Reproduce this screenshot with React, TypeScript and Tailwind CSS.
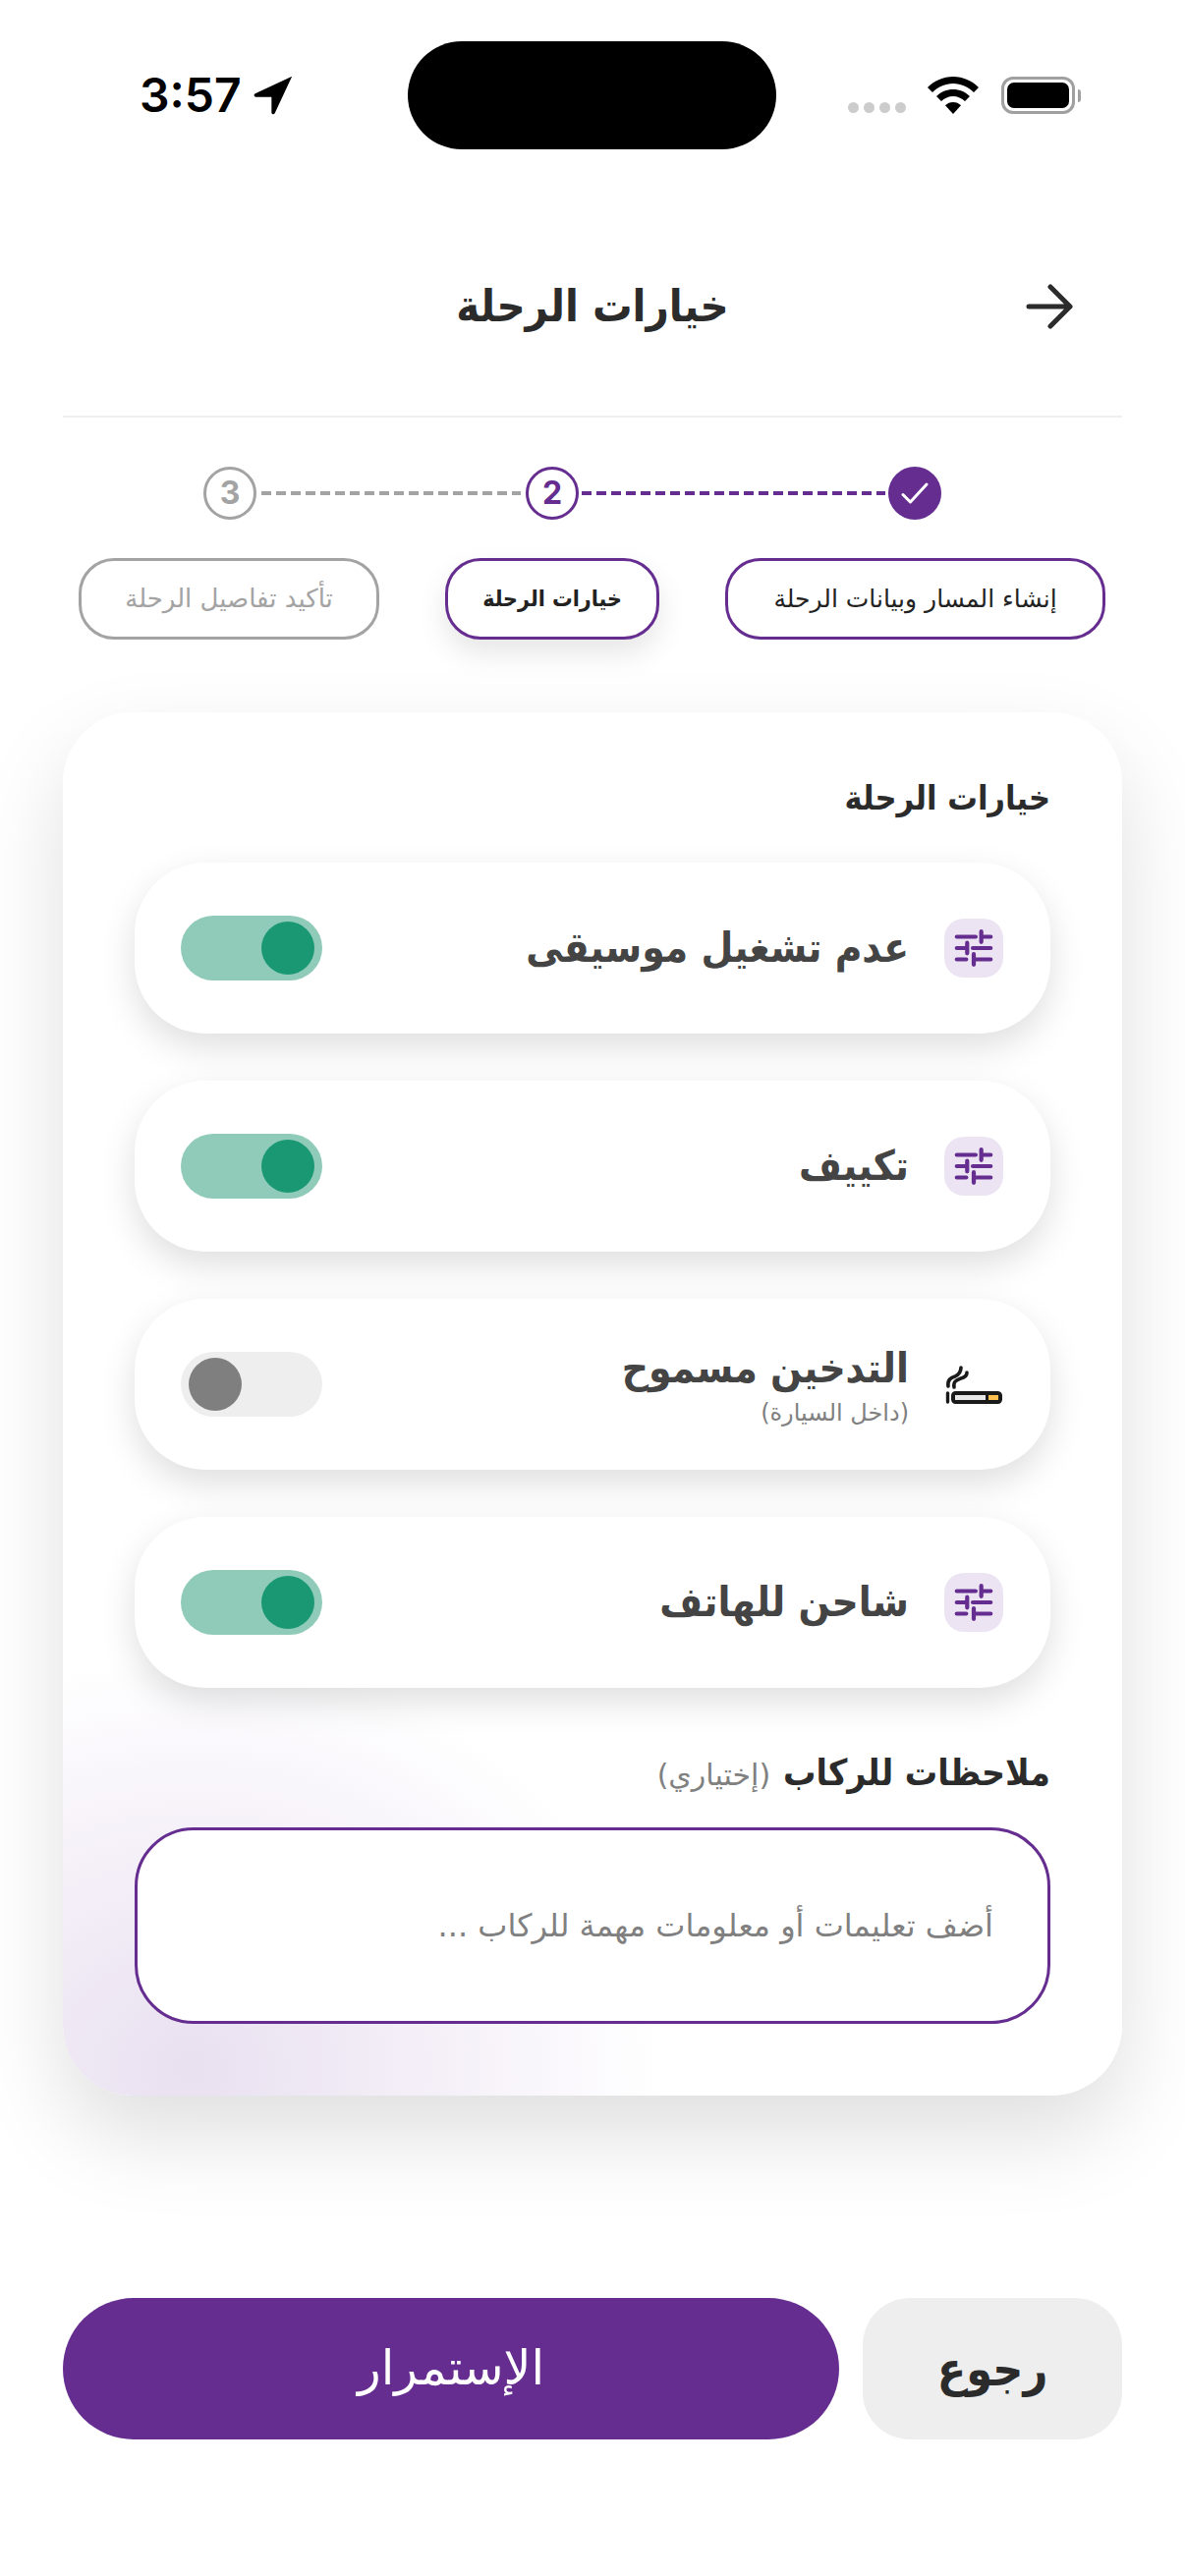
const PURPLE = '#652d90';
const CONDENSED = "font-['DejaVu_Sans_Condensed','DejaVu_Sans',sans-serif]";

function SlidersIcon() {
  return (
    <div className="flex h-[60px] w-[60px] shrink-0 items-center justify-center rounded-[20px] bg-[#ece4f2]">
      <svg viewBox="0 0 24 24" className="h-[46px] w-[46px]" fill="none" stroke={PURPLE} strokeWidth="2.2" strokeLinecap="round">
        <path d="M3 6h10M16 3.200v5.600M16 6h5" />
        <path d="M3 12h5M8.500 9.200v5.600M11.500 12H21" />
        <path d="M3 18h5M12 15.200v5.600M12 18h9" />
      </svg>
    </div>
  );
}

function CigaretteIcon() {
  return (
    <div className="flex h-[60px] w-[60px] shrink-0 items-center justify-center">
      <svg viewBox="0 0 58 40" className="h-[40px] w-[58px]" fill="none">
        <path d="M3 22c-1-7 3-9 7-10 4-2 6-4 6-9" stroke="#1a1a1a" strokeWidth="3.600" strokeLinecap="round" />
        <path d="M9 23c-1-6 2-7 7-9 4-1 6-3 6-6" stroke="#1a1a1a" strokeWidth="3.600" strokeLinecap="round" />
        <path d="M2.500 29v9" stroke="#1a1a1a" strokeWidth="3.400" strokeLinecap="round" />
        <rect x="8" y="29" width="48" height="9" rx="2.500" fill="#fff" stroke="#1a1a1a" strokeWidth="4" />
        <rect x="10" y="31" width="31" height="5" fill="#e8e8e8" />
        <rect x="41" y="29" width="3" height="9" fill="#1a1a1a" />
        <rect x="44" y="31" width="10" height="5" fill="#fbbf4d" />
      </svg>
    </div>
  );
}

function Toggle({ on }: { on: boolean }) {
  return (
    <div className={`flex h-[66px] w-[144px] shrink-0 items-center rounded-full px-2 ${on ? 'justify-end bg-[#8fcbb8]' : 'justify-start bg-[#eeeeee]'}`} dir="ltr">
      <div className={`h-[54px] w-[54px] rounded-full ${on ? 'bg-[#1a9874]' : 'bg-[#7f7f7f]'}`} />
    </div>
  );
}

function OptionRow({ title, sub, on, icon }: { title: string; sub?: string; on: boolean; icon: React.ReactNode }) {
  return (
    <div className="flex h-[174px] items-center justify-between rounded-[72px] bg-white pr-12 pl-[47px] shadow-[0_14px_36px_rgba(0,0,0,0.13)]">
      <div className="flex items-center gap-[36px]">
        {icon}
        <div className="flex flex-col">
          <span className={`${CONDENSED} text-[42px] leading-[58px] font-bold text-[#444444]`}>{title}</span>
          {sub && <span className="text-[24px] leading-[32px] text-[#808080]">{sub}</span>}
        </div>
      </div>
      <Toggle on={on} />
    </div>
  );
}

function StatusBar() {
  return (
    <div dir="ltr" className="mt-[42px] flex h-[110px] items-center pr-[106px] pl-[142px]">
      <div className="flex w-[273px] items-center gap-[12px] font-['Inter',sans-serif] text-[48px] leading-none font-semibold text-black">
        <span>3:57</span>
        <svg viewBox="0 0 24 24" className="h-[40px] w-[40px]" fill="#000">
          <path d="M23.500.5 1 11c-1 .5-.7 2 .5 2h9.500v9.500c0 1.200 1.500 1.500 2 .5L23.500.5z" />
        </svg>
      </div>
      <div className="h-[110px] w-[375px] rounded-[55px] bg-black" />
      <div className="ml-auto flex items-center">
        <div className="mt-[25px] mr-[22px] flex gap-[5px]">
          <div className="h-[11px] w-[11px] rounded-full bg-[#cccccc]" />
          <div className="h-[11px] w-[11px] rounded-full bg-[#cccccc]" />
          <div className="h-[11px] w-[11px] rounded-full bg-[#cccccc]" />
          <div className="h-[11px] w-[11px] rounded-full bg-[#cccccc]" />
        </div>
        <svg viewBox="0 0 52 38" className="mr-[23px] h-[38px] w-[52px]" fill="#000">
          <path d="M26 0C16 0 7 4 0 11l5 5c5.500-5.500 13-9 21-9s15.500 3.500 21 9l5-5C45 4 36 0 26 0z" />
          <path d="M26 13c-6.500 0-12.500 2.500-17 7l5 5c3-3 7.500-5 12-5s9 2 12 5l5-5c-4.500-4.500-10.500-7-17-7z" />
          <path d="M26 26c-3 0-6 1.200-8 3.300L26 38l8-8.700C32 27.200 29 26 26 26z" />
        </svg>
        <div className="flex items-center gap-[3px]">
          <div className="flex h-[38px] w-[75px] items-center justify-center rounded-[12px] border-[3px] border-[#a0a0a0]">
            <div className="h-[26px] w-[63px] rounded-[7px] bg-black" />
          </div>
          <div className="h-[13px] w-[3px] rounded-r-full bg-[#a0a0a0]" />
        </div>
      </div>
    </div>
  );
}

function Stepper() {
  return (
    <div className="mt-[50px] flex items-center pr-[248px]">
      <div className="flex h-[54px] w-[54px] items-center justify-center rounded-full bg-[#652d90]">
        <svg viewBox="0 0 24 24" className="h-[36px] w-[36px]" fill="none" stroke="#fff" strokeWidth="2" strokeLinecap="round" strokeLinejoin="round">
          <path d="M4 13l5 5L20 6" />
        </svg>
      </div>
      <div className="mx-[3px] h-[4px] w-[309px] bg-[repeating-linear-gradient(90deg,#652d90_0,#652d90_10px,transparent_10px,transparent_15px)]" />
      <div className="flex h-[54px] w-[54px] items-center justify-center rounded-full border-[3px] border-[#652d90] font-['Inter',sans-serif] text-[32px] font-bold text-[#652d90]">2</div>
      <div className="mx-[5px] h-[4px] w-[264px] bg-[repeating-linear-gradient(90deg,#a3a3a3_0,#a3a3a3_10px,transparent_10px,transparent_15px)]" />
      <div className="flex h-[54px] w-[54px] items-center justify-center rounded-full border-[3px] border-[#a3a3a3] font-['Inter',sans-serif] text-[32px] font-bold text-[#a3a3a3]">3</div>
    </div>
  );
}

export default function App() {
  return (
    <div dir="rtl" className="min-h-[2622px] bg-white font-['DejaVu_Sans',sans-serif]">
      <StatusBar />

      <div className="relative mt-[100px] flex h-[120px] items-center justify-center">
        <h1 className={`${CONDENSED} text-[45px] font-bold text-[#2b2b2b]`}>خيارات الرحلة</h1>
        <svg viewBox="0 0 48 48" className="absolute top-[36px] right-[114px] h-[48px] w-[48px]" fill="none" stroke="#2b2b2b" strokeWidth="5" strokeLinecap="round" strokeLinejoin="round">
          <path d="M3 24h42M25 4l20 20-20 20" />
        </svg>
      </div>

      <div className="mx-16 mt-[51px] h-[2px] bg-[#eeeeee]" />

      <Stepper />

      <div className="mt-[39px] flex justify-start gap-[67px] pr-[81px]">
        <div className="flex h-[83px] w-[387px] items-center justify-center rounded-[36px] border-[3px] border-[#652d90] bg-white text-[25px] text-[#222222]">إنشاء المسار وبيانات الرحلة</div>
        <div className={`${CONDENSED} flex h-[83px] w-[218px] items-center justify-center rounded-[36px] border-[3px] border-[#652d90] bg-white text-[23px] font-bold text-[#222222] shadow-[0_14px_30px_rgba(0,0,0,0.1)]`}>خيارات الرحلة</div>
        <div className="flex h-[83px] w-[306px] items-center justify-center rounded-[36px] border-[3px] border-[#a3a3a3] bg-white text-[26px] text-[#a3a3a3]">تأكيد تفاصيل الرحلة</div>
      </div>

      <div className="mx-16 mt-[74px] h-[1408px] rounded-[72px] bg-[radial-gradient(ellipse_480px_420px_at_130px_1380px,#e9e0f0,#f6f2f9_60%,#ffffff)] px-[73px] pt-[62px] shadow-[0_40px_90px_rgba(0,0,0,0.13)]">
        <h2 className={`${CONDENSED} text-[34px] leading-[50px] font-bold text-[#2b2b2b]`}>خيارات الرحلة</h2>

        <div className="mt-[41px] flex flex-col gap-12">
          <OptionRow title="عدم تشغيل موسيقى" on icon={<SlidersIcon />} />
          <OptionRow title="تكييف" on icon={<SlidersIcon />} />
          <OptionRow title="التدخين مسموح" sub="(داخل السيارة)" on={false} icon={<CigaretteIcon />} />
          <OptionRow title="شاحن للهاتف" on icon={<SlidersIcon />} />
        </div>

        <div className="mt-[62px] text-[37px] leading-[50px] font-bold text-[#2b2b2b]">
          <span className={CONDENSED}>ملاحظات للركاب</span> <span className="text-[30px] font-normal text-[#808080]">(إختياري)</span>
        </div>

        <div className="mt-[28px] flex h-[200px] items-center rounded-[60px] border-[3px] border-[#652d90] bg-white pr-[55px] text-[32px] text-[#808080]">
          أضف تعليمات أو معلومات مهمة للركاب ...
        </div>
      </div>

      <div className="mx-16 mt-[206px] flex gap-6">
        <button className={`${CONDENSED} flex h-[144px] w-[264px] items-center justify-center rounded-[48px] bg-[#eeeeee] text-[48px] font-bold text-[#2b2b2b]`}>رجوع</button>
        <button className="flex h-[144px] flex-1 items-center justify-center rounded-[72px] bg-[#652d90] text-[49px] text-white">الإستمرار</button>
      </div>
    </div>
  );
}
